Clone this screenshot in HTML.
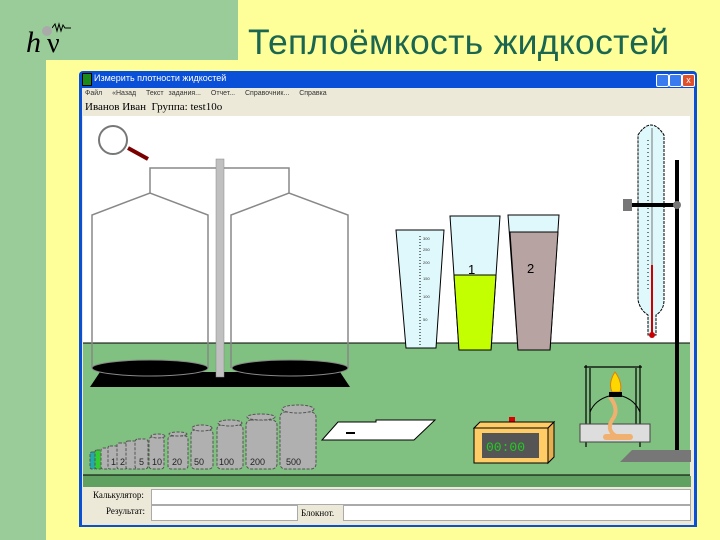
<!DOCTYPE html>
<html><head><meta charset="utf-8"><style>
*{margin:0;padding:0}
body{width:720px;height:540px;position:relative;overflow:hidden;background:#ffff99;font-family:"Liberation Sans",sans-serif}
.abs{position:absolute}
</style></head><body>
<div class="abs" style="left:0;top:0;width:238px;height:60px;background:#99cc99"></div>
<div class="abs" style="left:0;top:0;width:46px;height:540px;background:#99cc99"></div>
<div class="abs" style="left:46px;top:60px;width:40px;height:40px;background:#ffff99;border-top-left-radius:22px"></div>
<div class="abs" style="left:26px;top:26px;font:italic 30px 'Liberation Serif',serif;color:#000">h</div>
<div class="abs" style="left:47px;top:28px;font:28px 'Liberation Serif',serif;color:#000">ν</div>
<div class="abs" style="left:42px;top:26px;width:10px;height:10px;border-radius:50%;background:#aaa"></div>
<svg class="abs" style="left:52px;top:22px" width="20" height="12"><path d="M0 6 L3 2 L5 9 L7 2 L9 9 L11 3 L13 6 L19 6" stroke="#000" fill="none" stroke-width="1"/></svg>
<div class="abs" style="left:248px;top:22px;font-size:35.5px;color:#1a6650;letter-spacing:0.3px">Теплоёмкость жидкостей</div>

<!-- window -->
<div class="abs" style="left:79px;top:71px;width:618px;height:456px;background:#0a4fd8;border-radius:4px 4px 0 0"></div>
<div class="abs" style="left:82px;top:73px;width:8px;height:11px;background:#1a8a1a;border:1px solid #000"></div>
<div class="abs" style="left:94px;top:73px;font-size:9px;color:#fff">Измерить плотности жидкостей</div>
<div class="abs" style="left:656px;top:74px;width:11px;height:11px;background:#3a7cf0;border:1px solid #fff;border-radius:2px"></div>
<div class="abs" style="left:669px;top:74px;width:11px;height:11px;background:#3a7cf0;border:1px solid #fff;border-radius:2px"></div>
<div class="abs" style="left:682px;top:74px;width:11px;height:11px;background:#e0502a;border:1px solid #fff;border-radius:2px;color:#fff;font-size:9px;line-height:11px;text-align:center">x</div>
<div class="abs" style="left:82px;top:88px;width:612px;height:437px;background:#ece9d8"></div>
<div class="abs" style="left:85px;top:90px;font-size:7px;color:#333;word-spacing:3px">Файл &nbsp;«Назад &nbsp;Текст задания... &nbsp;Отчет... &nbsp;Справочник... &nbsp;Справка</div>
<div class="abs" style="left:85px;top:101px;font:11px 'Liberation Serif',serif;color:#000">Иванов Иван&nbsp; Группа: test10o</div>

<svg class="abs" style="left:0;top:0" width="720" height="540">
<rect x="83" y="116" width="608" height="227" fill="#fff"/>
<rect x="83" y="343" width="608" height="132" fill="#80c080"/>
<line x1="83" y1="343" x2="691" y2="343" stroke="#000"/>
<rect x="83" y="475" width="608" height="12" fill="#60a060"/>
<line x1="83" y1="475" x2="691" y2="475" stroke="#000"/>
<rect x="690" y="116" width="4" height="360" fill="#ece9d8"/>
<line x1="128" y1="148" x2="148" y2="159" stroke="#7a0000" stroke-width="4"/>
<circle cx="113" cy="140" r="14" fill="#fff" stroke="#777" stroke-width="2"/>
<g fill="none" stroke="#888" stroke-width="1.5">
<path d="M150 193 V168 H289 V193"/>
<path d="M92 368 V215 L150 193 L208 215 V368"/>
<path d="M231 368 V215 L289 193 L348 215 V368"/>
</g>
<polygon points="100,372 340,372 350,387 90,387" fill="#000"/>
<ellipse cx="150" cy="368" rx="58" ry="8" fill="#000" stroke="#888"/>
<ellipse cx="290" cy="368" rx="58" ry="8" fill="#000" stroke="#888"/>
<rect x="216" y="159" width="8" height="218" fill="#c0c0c0" stroke="#888" stroke-width="0.5"/>
<path d="M396 230 H444 L436 348 H406 Z" fill="#dff8fb" stroke="#000"/>
<path d="M450 216 H500 L491 350 H459 Z" fill="#dff8fb" stroke="#000"/>
<path d="M454 275 H496 L491 350 H459 Z" fill="#c3ff00" stroke="#000"/>
<path d="M508 215 H559 L550 350 H518 Z" fill="#dff8fb" stroke="#000"/>
<path d="M510 232 H558 L550 350 H518 Z" fill="#b8a3a3" stroke="#000"/>
<text x="468" y="274" font-size="13" font-family="Liberation Sans">1</text>
<text x="527" y="273" font-size="13" font-family="Liberation Sans">2</text>
<line x1="420" y1="236" x2="420" y2="345" stroke="#000" stroke-dasharray="1 2"/>
<g font-size="4" fill="#333"><text x="423" y="240">300</text><text x="423" y="251">250</text><text x="423" y="264">200</text><text x="423" y="280">150</text><text x="423" y="298">100</text><text x="423" y="321">50</text></g>
<path d="M638 135 Q651 115 664 135 V300 Q664 310 656 315 V335 H648 V315 Q640 310 638 300 Z" fill="#dff8fb" stroke="#000" stroke-dasharray="3 1"/>
<line x1="652" y1="128" x2="652" y2="330" stroke="#777"/>
<line x1="652" y1="265" x2="652" y2="333" stroke="#c00" stroke-width="2"/>
<circle cx="652" cy="335" r="3" fill="#c00"/>
<line x1="648" y1="140" x2="648" y2="292" stroke="#000" stroke-dasharray="1 3"/>
<rect x="675" y="160" width="4" height="302" fill="#000"/>
<rect x="623" y="203" width="56" height="4" fill="#000"/>
<rect x="623" y="199" width="9" height="12" fill="#777"/>
<circle cx="677" cy="205" r="4" fill="#777"/>
<polygon points="632,450 691,450 691,462 620,462" fill="#777"/>
<g fill="none" stroke="#000" stroke-width="1.2">
<path d="M584 367 H642 M586 365 V447 M640 365 V447 M590 368 V425 M636 368 V425"/>
</g>
<rect x="580" y="424" width="70" height="18" fill="#ddd" stroke="#444"/>
<path d="M610 397 Q620 410 612 420 Q605 432 620 438" stroke="#f0b070" stroke-width="4" fill="none"/>
<rect x="603" y="434" width="30" height="6" rx="3" fill="#f0b070"/>
<path d="M615 372 Q608 383 612 392 H620 Q623 383 615 372Z" fill="#ffd700" stroke="#e08000"/>
<rect x="609" y="392" width="13" height="5" fill="#000"/>
<path d="M609 396 Q595 400 590 412 M622 396 Q635 400 640 412" stroke="#000" fill="none"/>
<rect x="509" y="417" width="6" height="6" fill="#d00"/>
<path d="M474 428 L480 422 H554 L548 428 Z" fill="#ffcc66" stroke="#000"/>
<path d="M548 428 L554 422 V457 L548 463 Z" fill="#e6b050" stroke="#000"/>
<rect x="474" y="428" width="74" height="35" fill="#ffcc66" stroke="#000"/>
<rect x="482" y="433" width="57" height="25" fill="#555"/>
<text x="486" y="451" font-size="13" fill="#2c2" font-family="Liberation Mono">00:00</text>
<polygon points="338,422 376,422 376,420 435,420 414,440 322,440" fill="#fff" stroke="#000"/>
<line x1="346" y1="433" x2="355" y2="433" stroke="#000" stroke-width="2"/>
<g fill="#b0b0b0" stroke="#555" stroke-dasharray="3 1.5">
<rect x="90" y="452" width="6" height="17" rx="2" fill="#2aa"/>
<rect x="95" y="450" width="7" height="19" rx="2" fill="#3c3"/>
<rect x="101" y="448" width="8" height="21" rx="2"/>
<rect x="108" y="446" width="10" height="23" rx="2"/>
<rect x="117" y="443" width="10" height="26" rx="2"/>
<rect x="126" y="441" width="11" height="28" rx="2"/>
<rect x="135" y="439" width="13" height="30" rx="3"/>
<rect x="149" y="437" width="15" height="32" rx="3"/>
<rect x="168" y="436" width="20" height="33" rx="3"/>
<rect x="191" y="430" width="22" height="39" rx="4"/>
<rect x="217" y="425" width="26" height="44" rx="4"/>
<rect x="246" y="420" width="31" height="49" rx="5"/>
<rect x="280" y="412" width="36" height="57" rx="5"/>
<ellipse cx="158" cy="436" rx="7" ry="2"/><ellipse cx="178" cy="434" rx="9" ry="2"/><ellipse cx="202" cy="428" rx="10" ry="3"/><ellipse cx="230" cy="423" rx="12" ry="3"/><ellipse cx="261" cy="417" rx="14" ry="3"/><ellipse cx="298" cy="409" rx="16" ry="4"/>
</g>
<g font-size="9" font-family="Liberation Sans" fill="#222">
<text x="111" y="465">1</text><text x="120" y="465">2</text><text x="139" y="465">5</text><text x="152" y="465">10</text><text x="172" y="465">20</text><text x="194" y="465">50</text><text x="219" y="465">100</text><text x="250" y="465">200</text><text x="286" y="465">500</text>
</g>
</svg>

<div class="abs" style="left:82px;top:487px;width:612px;height:38px;background:#ece9d8"></div>
<div class="abs" style="left:93px;top:490px;font:9px 'Liberation Serif',serif">Калькулятор:</div>
<div class="abs" style="left:151px;top:489px;width:538px;height:14px;background:#fff;border:1px solid #aaa"></div>
<div class="abs" style="left:106px;top:506px;font:9px 'Liberation Serif',serif">Результат:</div>
<div class="abs" style="left:151px;top:505px;width:145px;height:14px;background:#fff;border:1px solid #aaa"></div>
<div class="abs" style="left:301px;top:508px;font:9px 'Liberation Serif',serif">Блокнот.</div>
<div class="abs" style="left:343px;top:505px;width:346px;height:14px;background:#fff;border:1px solid #aaa"></div>
</body></html>
